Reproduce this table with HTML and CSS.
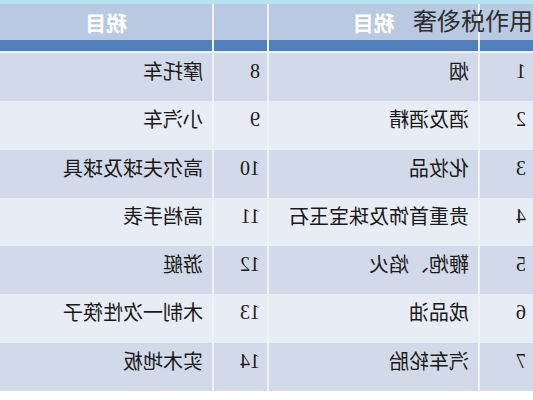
FILE: index.html
```html
<!DOCTYPE html>
<html lang="zh-CN">
<head>
<meta charset="utf-8">
<title>奢侈税作用</title>
<link rel="stylesheet" href="styles.css">
</head>
<body>
<div class="page">
  <div class="top-strip"></div>
  <div class="sheet">
    <div class="cell head"></div>
    <div class="cell head title">税目</div>
    <div class="cell head"></div>
    <div class="cell head title">税目</div>

    <div class="cell num dark">1</div>
    <div class="cell item dark">烟</div>
    <div class="cell num dark">8</div>
    <div class="cell item dark">摩托车</div>

    <div class="cell num light">2</div>
    <div class="cell item light">酒及酒精</div>
    <div class="cell num light">9</div>
    <div class="cell item light">小汽车</div>

    <div class="cell num dark">3</div>
    <div class="cell item dark">化妆品</div>
    <div class="cell num dark">10</div>
    <div class="cell item dark">高尔夫球及球具</div>

    <div class="cell num light">4</div>
    <div class="cell item light">贵重首饰及珠宝玉石</div>
    <div class="cell num light">11</div>
    <div class="cell item light">高档手表</div>

    <div class="cell num dark">5</div>
    <div class="cell item dark">鞭炮、焰火</div>
    <div class="cell num dark">12</div>
    <div class="cell item dark">游艇</div>

    <div class="cell num light">6</div>
    <div class="cell item light">成品油</div>
    <div class="cell num light">13</div>
    <div class="cell item light">木制一次性筷子</div>

    <div class="cell num dark">7</div>
    <div class="cell item dark">汽车轮胎</div>
    <div class="cell num dark">14</div>
    <div class="cell item dark">实木地板</div>
  </div>
  <div class="caption">奢侈税作用</div>
</div>
</body>
</html>
```

FILE: styles.css
```css
html, body {
  margin: 0;
  padding: 0;
  background: #ffffff;
}

.page {
  position: relative;
  width: 533px;
  height: 400px;
  overflow: hidden;
  background: #ffffff;
}

.top-strip {
  height: 4px;
  background: #b6e2f0;
}

.sheet {
  display: grid;
  grid-template-columns: 53px 209px 53px 212px;
  grid-template-rows: 49px repeat(7, 48.3px);
  column-gap: 2px;
  row-gap: 0;
  background: #eef3f8;
  transform: scaleX(-1);
}

.cell {
  font-family: "Noto Sans CJK SC", "Noto Sans", sans-serif;
  font-size: 20px;
  line-height: 22px;
  color: #1a1a1a;
  box-sizing: border-box;
  padding-top: 7px;
}

.head {
  background: #b8c9e1;
  border-bottom: 11px solid #4f7fbd;
  margin-bottom: 2px;
  padding-top: 7px;
  text-align: center;
}

.title {
  color: #ffffff;
  font-weight: 700;
  font-size: 21px;
}

.num {
  font-family: "Liberation Serif", "DejaVu Serif", serif;
  padding-left: 7px;
}

.item {
  padding-left: 9px;
}

.dark {
  background: #d2d9e8;
}

.light {
  background: #e8ecf4;
}

.caption {
  position: absolute;
  top: 5px;
  right: 0;
  font-family: "Noto Sans CJK SC", "Noto Sans", sans-serif;
  font-size: 24px;
  line-height: 30px;
  font-weight: 400;
  color: #2e2e2e;
}
```
